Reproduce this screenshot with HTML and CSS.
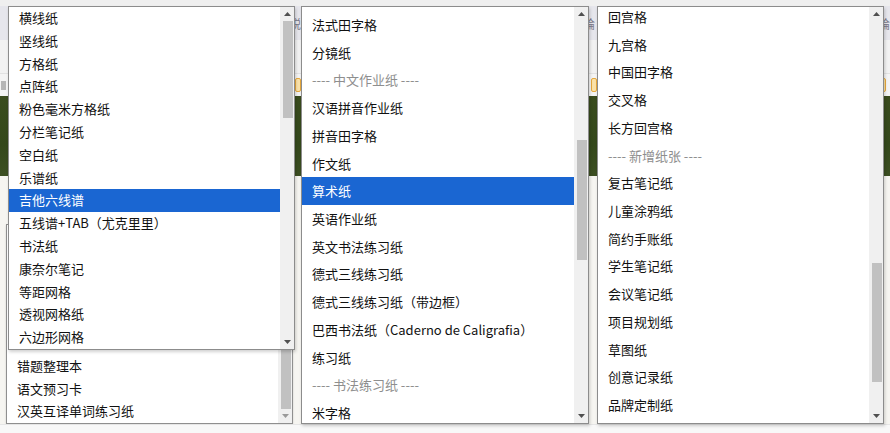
FILE: index.html
```html
<!DOCTYPE html>
<html lang="zh-CN">
<head>
<meta charset="utf-8">
<title>纸张选择</title>
<link rel="stylesheet" href="styles.css">
</head>
<body>
<div class="page">
  <div class="bg-top"></div>
  <div class="bg-nav"><span class="nav-box"></span><span class="nav-t">説</span><span class="nav-t">論</span><span class="nav-t">論</span></div>
  <div class="bg-bar"></div>
  <div class="bg-tools"><span class="tool-mark"></span><span class="chip"></span><span class="chip"></span><span class="chip"></span></div>
  <div class="bg-green"></div>
  <div class="bg-main">
    <div class="listbox">
      <div class="lb-list">
        <div class="lb-opt">错题整理本</div>
        <div class="lb-opt">语文预习卡</div>
        <div class="lb-opt">汉英互译单词练习纸</div>
      </div>
      <div class="sb">
        <div class="sb-track"><div class="sb-thumb sb-fill"></div></div>
        <div class="sb-btn"><svg width="7" height="4" viewBox="0 0 7 4"><path d="M0 0H7L3.5 4Z" fill="#9a9a9a"/></svg></div>
      </div>
    </div>
  </div>
  <div class="bg-bottom"></div>
</div>

<div class="dropdown d1">
  <div class="list">
    <div class="opt">横线纸</div>
    <div class="opt">竖线纸</div>
    <div class="opt">方格纸</div>
    <div class="opt">点阵纸</div>
    <div class="opt">粉色毫米方格纸</div>
    <div class="opt">分栏笔记纸</div>
    <div class="opt">空白纸</div>
    <div class="opt">乐谱纸</div>
    <div class="opt sel">吉他六线谱</div>
    <div class="opt">五线谱+TAB（尤克里里）</div>
    <div class="opt">书法纸</div>
    <div class="opt">康奈尔笔记</div>
    <div class="opt">等距网格</div>
    <div class="opt">透视网格纸</div>
    <div class="opt">六边形网格</div>
  </div>
  <div class="sb">
    <div class="sb-btn"><svg width="7" height="4" viewBox="0 0 7 4"><path d="M0 4H7L3.5 0Z" fill="#505050"/></svg></div>
    <div class="sb-track"><div class="sb-thumb" style="margin-top:-1px;height:98px"></div></div>
    <div class="sb-btn"><svg width="7" height="4" viewBox="0 0 7 4"><path d="M0 0H7L3.5 4Z" fill="#505050"/></svg></div>
  </div>
</div>

<div class="dropdown d2">
  <div class="list tall shift">
    <div class="opt">法式田字格</div>
    <div class="opt">分镜纸</div>
    <div class="opt sep">---- 中文作业纸 ----</div>
    <div class="opt">汉语拼音作业纸</div>
    <div class="opt">拼音田字格</div>
    <div class="opt">作文纸</div>
    <div class="opt sel">算术纸</div>
    <div class="opt">英语作业纸</div>
    <div class="opt">英文书法练习纸</div>
    <div class="opt">德式三线练习纸</div>
    <div class="opt">德式三线练习纸（带边框）</div>
    <div class="opt">巴西书法纸（Caderno de Caligrafia）</div>
    <div class="opt">练习纸</div>
    <div class="opt sep">---- 书法练习纸 ----</div>
    <div class="opt">米字格</div>
  </div>
  <div class="sb">
    <div class="sb-btn"><svg width="7" height="4" viewBox="0 0 7 4"><path d="M0 4H7L3.5 0Z" fill="#505050"/></svg></div>
    <div class="sb-track"><div class="sb-thumb" style="margin-top:119px;height:120px"></div></div>
    <div class="sb-btn"><svg width="7" height="4" viewBox="0 0 7 4"><path d="M0 0H7L3.5 4Z" fill="#505050"/></svg></div>
  </div>
</div>

<div class="dropdown d3">
  <div class="list tall shift-up">
    <div class="opt">回宫格</div>
    <div class="opt">九宫格</div>
    <div class="opt">中国田字格</div>
    <div class="opt">交叉格</div>
    <div class="opt">长方回宫格</div>
    <div class="opt sep">---- 新增纸张 ----</div>
    <div class="opt">复古笔记纸</div>
    <div class="opt">儿童涂鸦纸</div>
    <div class="opt">简约手账纸</div>
    <div class="opt">学生笔记纸</div>
    <div class="opt">会议笔记纸</div>
    <div class="opt">项目规划纸</div>
    <div class="opt">草图纸</div>
    <div class="opt">创意记录纸</div>
    <div class="opt">品牌定制纸</div>
  </div>
  <div class="sb">
    <div class="sb-btn"><svg width="7" height="4" viewBox="0 0 7 4"><path d="M0 4H7L3.5 0Z" fill="#505050"/></svg></div>
    <div class="sb-track"><div class="sb-thumb" style="margin-top:242px;height:119px"></div></div>
    <div class="sb-btn"><svg width="7" height="4" viewBox="0 0 7 4"><path d="M0 0H7L3.5 4Z" fill="#505050"/></svg></div>
  </div>
</div>
</body>
</html>
```

FILE: styles.css
```css
* { box-sizing: border-box; }
html, body { margin: 0; padding: 0; }
body {
  width: 890px;
  height: 433px;
  overflow: hidden;
  position: relative;
  font-family: "Noto Sans CJK SC", "Liberation Sans", sans-serif;
  font-size: 13px;
  color: #111;
  background: #f6f5f2;
}

/* background page (partly visible between the popups) */
.page { width: 890px; height: 433px; display: flex; flex-direction: column; }
.bg-top { height: 6px; background: #efefef; flex: none; }
.bg-nav {
  height: 34px; flex: none; background: #e6e6ec;
  display: flex; align-items: center;
  font-size: 12px; color: #7a7a8a;
}
.nav-box { width: 6px; height: 10px; margin-left: 2px; background: #b9bfd6; border-radius: 2px; }
.nav-t:nth-child(2) { margin-left: 287px; }
.nav-t:nth-child(3) { margin-left: 282px; }
.nav-t:nth-child(4) { margin-left: 283px; }
.bg-bar { height: 34px; flex: none; background: #f2f2f2; border-bottom: 1px solid #e2e2e2; }
.bg-tools {
  height: 22px; flex: none; background: #f4f4f4; display: flex; align-items: center;
}
.tool-mark { width: 5px; height: 9px; margin-left: 1px; background: #8c8c8c; opacity: .6; }
.chip { width: 6px; height: 14px; border: 1px solid #e8a93c; background: #fbe2a8; border-radius: 2px; }
.chip:nth-of-type(2) { margin-left: 289px; }
.chip:nth-of-type(3) { margin-left: 290px; }
.chip:nth-of-type(4) { margin-left: 283px; }
.bg-green {
  height: 80px; flex: none;
  background: linear-gradient(#3a4c1e, #34481b 60%, #3c4f22);
}
.bg-main { flex: 1; padding: 0 0 0 6px; display: flex; flex-direction: column; justify-content: flex-end; background: #f6f5f1; }
.bg-bottom { height: 9px; flex: none; background: #f8f8f8; border-top: 1px solid #e6e6e6; }

.listbox {
  width: 287px; height: 200px;
  border: 1px solid #8f8f8f; background: #fff;
  display: flex;
  box-shadow: 0 1px 2px rgba(0,0,0,0.15);
}
.lb-list { flex: 1; display: flex; flex-direction: column; justify-content: flex-end; overflow: hidden; }
.lb-opt { height: 22.7px; line-height: 22.7px; padding-left: 10px; white-space: nowrap; flex: none; }

/* dropdown popups overlaying the page */
.dropdown {
  position: absolute;
  top: 6px;
  background: #fff;
  border: 1px solid #8c8c8c;
  display: flex;
  box-shadow: 1px 2px 3px rgba(0,0,0,0.18);
}
.d1 { left: 8px; width: 287px; height: 344px; }
.d2 { left: 301px; width: 288px; height: 418px; }
.d3 { left: 597px; width: 287px; height: 418px; }

.list { flex: 1; overflow: hidden; display: flex; flex-direction: column; }
.opt {
  flex: none;
  height: 22.8px; line-height: 22.8px;
  padding-left: 10px;
  white-space: nowrap;
}
.list.tall .opt { height: 27.73px; line-height: 27.73px; }
.list.shift { padding-top: 4px; }
.list.shift-up { margin-top: -4px; }
.opt.sel { background: #1a66d2; color: #fff; }
.opt.sep { color: #8e8e8e; }

/* scrollbars */
.sb { width: 14px; flex: none; background: #f0f0f0; display: flex; flex-direction: column; }
.sb-btn { height: 14px; flex: none; display: flex; align-items: center; justify-content: center; padding-left: 1px; }
.sb-btn svg { display: block; }
.sb-track { flex: 1; display: flex; flex-direction: column; overflow: hidden; }
.sb-thumb { flex: none; margin-left: 3px; margin-right: 1px; background: #c1c1c1; }
.sb-thumb.sb-fill { flex: 1; }
```
